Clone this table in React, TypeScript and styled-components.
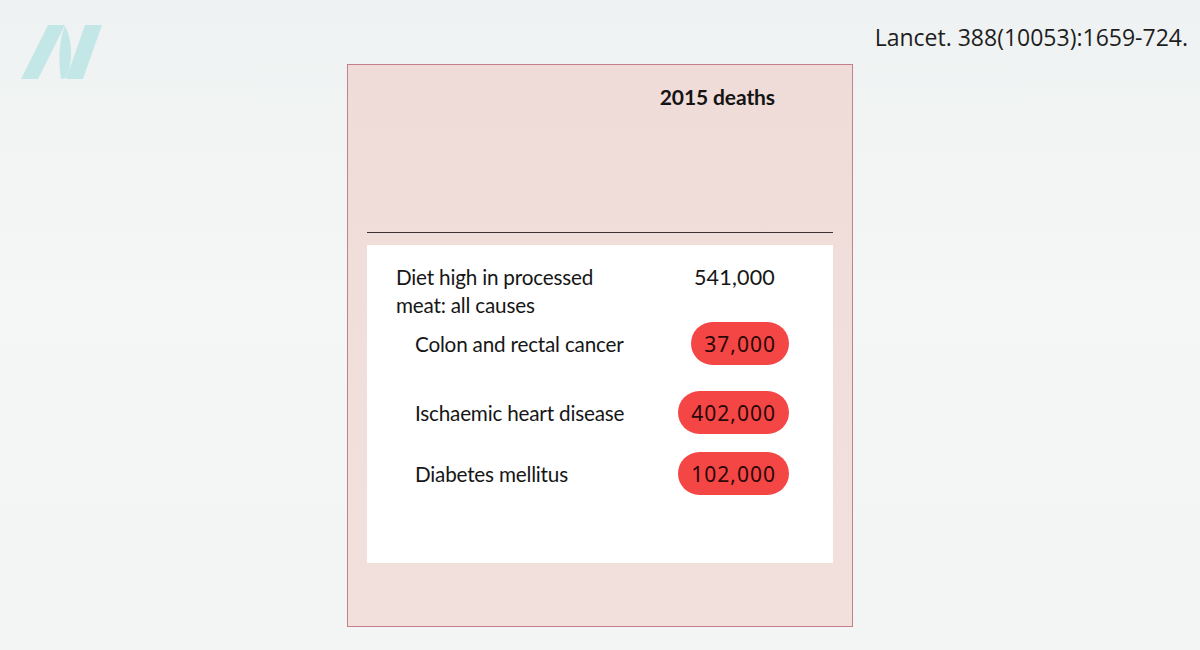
import React from 'react'
import styled, { createGlobalStyle } from 'styled-components'

const GlobalStyle = createGlobalStyle`
    html, body {
        margin: 0;
        padding: 0;
    }
    body {
        background: linear-gradient(180deg, #eff2f2 0%, #f5f6f6 45%, #f3f4f4 100%);
        font-family: "Lato", "Liberation Sans", sans-serif;
        color: #1c1c1c;
    }
`

const Page = styled.div`
    width: 1200px;
    height: 650px;
    display: grid;
    grid-template-columns: 1fr 506px 1fr;
    align-items: start;
    overflow: hidden;
`

const LogoCell = styled.div`
    padding-top: 24px;
    padding-left: 20px;
`

const CiteCell = styled.div`
    padding-top: 21px;
    padding-right: 12px;
    text-align: right;
    white-space: nowrap;
    font-family: "Open Sans", "Noto Sans", sans-serif;
    font-size: 23px;
    color: #1e1e1e;
`

const Card = styled.div`
    margin-top: 64px;
    height: 563px;
    box-sizing: border-box;
    border: 1px solid #c47f8c;
    background: linear-gradient(180deg, #efdcd8 0%, #f1dfdc 60%, #f2e0dd 100%);
    padding: 0 19px;
    display: flex;
    flex-direction: column;
`

const CardHead = styled.div`
    height: 168px;
    box-sizing: border-box;
    border-bottom: 1px solid #3e3232;
    display: flex;
    justify-content: flex-end;
    padding-top: 19px;
    padding-right: 58px;
`

const HeadTitle = styled.h3`
    margin: 0;
    font-size: 21px;
    font-weight: 700;
    color: #141414;
    letter-spacing: -0.1px;
`

const Panel = styled.div`
    margin-top: 12px;
    height: 318px;
    background: #ffffff;
    padding: 18px 44px 0 29px;
    box-sizing: border-box;
`

const Row = styled.div<{ $top?: number; $indent?: boolean }>`
    display: flex;
    align-items: center;
    margin-top: ${({ $top }) => $top || 0}px;
    min-height: 43px;
    padding-left: ${({ $indent }) => ($indent ? 19 : 0)}px;
`

const MainRow = styled.div`
    display: flex;
    align-items: flex-start;
`

const Label = styled.div`
    flex: 1;
    font-size: 20.7px;
    line-height: 28px;
    color: #161616;
    letter-spacing: -0.2px;
`

const ValueCell = styled.div`
    width: 124px;
    display: flex;
    justify-content: flex-end;
`

const Plain = styled.span`
    padding-right: 14px;
    font-size: 21.5px;
    line-height: 28px;
    color: #161616;
    letter-spacing: 0.2px;
`

const Pill = styled.span`
    display: inline-flex;
    align-items: center;
    height: 43px;
    padding: 0 13px;
    border-radius: 22px;
    background: #f54646;
    color: #2a0808;
    font-family: "Noto Sans", "Open Sans", sans-serif;
    font-size: 21px;
    letter-spacing: 1px;
`

const Logo = () => (
    <svg width="84" height="58" viewBox="20 24 84 58">
        <g fill="#c3e7e6">
            <polygon points="48,25 65,25 38,79 21,79" />
            <path d="M65 26 C72 40 74 60 66 78 L61 79 C58 60 59 40 65 26 Z" />
            <polygon points="85,25 102,25 83,79 66,79" />
        </g>
    </svg>
)

const rows = [
    { label: 'Colon and rectal cancer', value: '37,000', top: 3 },
    { label: 'Ischaemic heart disease', value: '402,000', top: 26 },
    { label: 'Diabetes mellitus', value: '102,000', top: 18 },
]

function App() {
    return (
        <>
            <GlobalStyle />
            <Page>
                <LogoCell>
                    <Logo />
                </LogoCell>
                <Card>
                    <CardHead>
                        <HeadTitle>2015 deaths</HeadTitle>
                    </CardHead>
                    <Panel>
                        <MainRow>
                            <Label>
                                Diet high in processed
                                <br />
                                meat: all causes
                            </Label>
                            <ValueCell>
                                <Plain>541,000</Plain>
                            </ValueCell>
                        </MainRow>
                        {rows.map((r) => (
                            <Row key={r.label} $top={r.top} $indent>
                                <Label>{r.label}</Label>
                                <ValueCell>
                                    <Pill>{r.value}</Pill>
                                </ValueCell>
                            </Row>
                        ))}
                    </Panel>
                </Card>
                <CiteCell>Lancet. 388(10053):1659-724.</CiteCell>
            </Page>
        </>
    )
}

export default App
